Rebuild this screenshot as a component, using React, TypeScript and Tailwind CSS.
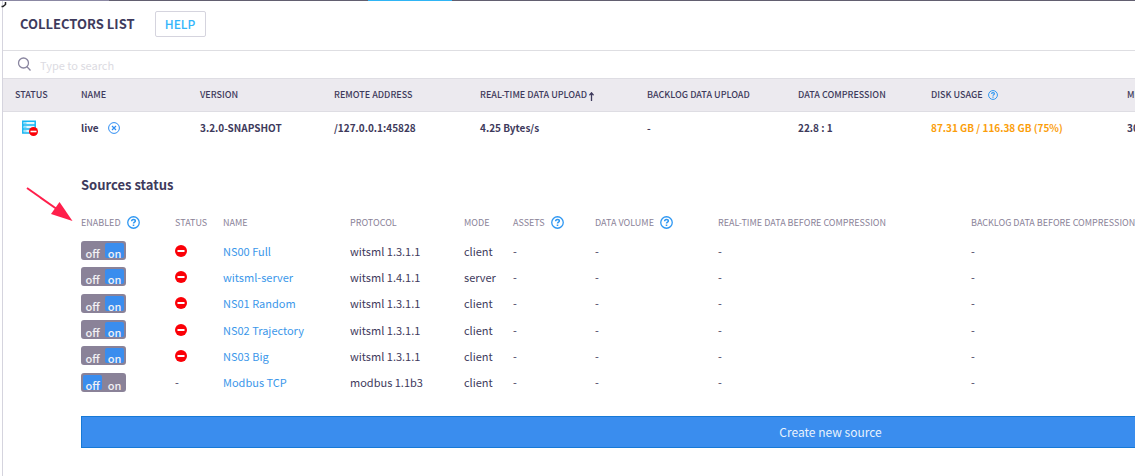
import React from "react";

const overview = [
  { label: "STATUS", width: "w-[66px]" },
  { label: "NAME", width: "w-[119px]" },
  { label: "VERSION", width: "w-[134px]" },
  { label: "REMOTE ADDRESS", width: "w-[146px]" },
  { label: "REAL-TIME DATA UPLOAD", width: "w-[167px]", sorted: true },
  { label: "BACKLOG DATA UPLOAD", width: "w-[151px]" },
  { label: "DATA COMPRESSION", width: "w-[133px]" },
  { label: "DISK USAGE", width: "w-[196px]", help: true },
  { label: "ME", width: "" },
];

const columns = [
  { label: "ENABLED", width: "w-[94px]", help: true },
  { label: "STATUS", width: "w-[48px]" },
  { label: "NAME", width: "w-[127px]" },
  { label: "PROTOCOL", width: "w-[114px]" },
  { label: "MODE", width: "w-[49px]" },
  { label: "ASSETS", width: "w-[82px]", help: true },
  { label: "DATA VOLUME", width: "w-[123px]", help: true },
  { label: "REAL-TIME DATA BEFORE COMPRESSION", width: "w-[253px]" },
  { label: "BACKLOG DATA BEFORE COMPRESSION", width: "" },
];

const sources = [
  { name: "NS00 Full", protocol: "witsml 1.3.1.1", mode: "client", on: true },
  { name: "witsml-server", protocol: "witsml 1.4.1.1", mode: "server", on: true },
  { name: "NS01 Random", protocol: "witsml 1.3.1.1", mode: "client", on: true },
  { name: "NS02 Trajectory", protocol: "witsml 1.3.1.1", mode: "client", on: true },
  { name: "NS03 Big", protocol: "witsml 1.3.1.1", mode: "client", on: true },
  { name: "Modbus TCP", protocol: "modbus 1.1b3", mode: "client", on: false },
];

function HelpIcon({ className }: { className: string }) {
  return (
    <svg className={className} viewBox="0 0 14 14" fill="none" stroke="#2e97f2" aria-hidden="true">
      <circle cx="7" cy="7" r="6.2" strokeWidth="1.4" />
      <path d="M5 5.6C5 4.4 5.8 3.7 7 3.7s2 .7 2 1.7C9 6.7 7 6.7 7 8.2" strokeWidth="1.6" />
      <path d="M7 9.2v1.6" strokeWidth="1.7" />
    </svg>
  );
}

function StoppedIcon() {
  return (
    <svg className="h-3 w-3" viewBox="0 0 12 12" role="img" aria-label="Stopped">
      <circle cx="6" cy="6" r="6" fill="#fb0007" />
      <rect x="2.5" y="5" width="7" height="2" fill="#fff" />
    </svg>
  );
}

function Toggle({ on, name }: { on: boolean; name: string }) {
  const active = "bg-[#3a8dee]";
  return (
    <button
      type="button"
      role="switch"
      aria-checked={on}
      aria-label={name}
      className="flex h-[19px] w-[45px] rounded-[3px] border-2 border-[#8a8298] bg-[#8a8298] text-[11px] leading-5 font-medium text-[#f1f0f4]"
    >
      <span className={`h-[15px] w-[19px] rounded-[2px] ${on ? "" : active}`}>off</span>
      <span className={`ml-[3px] h-[15px] w-[19px] rounded-[2px] ${on ? active : ""}`}>on</span>
    </button>
  );
}

export default function App() {
  return (
    <div className="relative min-h-screen overflow-hidden bg-white font-['Noto_Sans_CJK_SC','Noto_Sans',sans-serif] text-[#3e3a5c]">
      <div className="flex h-px bg-[#625f70]">
        <div className="w-[109px] bg-[#8b88a3]" />
        <div className="ml-[259px] w-[84px] bg-[#2fb5f5]" />
      </div>
      <svg className="absolute top-0 left-0 h-[8px] w-[8px]" viewBox="0 0 8 8" fill="none" aria-hidden="true">
        <path d="M5.5 2v2.5L3 6.500H1.500" stroke="#222" strokeWidth="1.5" />
      </svg>
      <main className="ml-[2px] min-h-[475px] min-w-[1578px] border-l border-[#d5d4de]">
        <header className="flex h-[50px] items-center gap-[20px] border-b border-[#dedee2] pb-[3px] pl-[17px]">
          <h1 className="text-[13px] leading-5 font-bold">COLLECTORS LIST</h1>
          <button type="button" className="h-[26px] w-[51px] rounded-[2px] border border-[#d5d4de] text-[12px] leading-5 font-medium text-[#33b5fb]">
            HELP
          </button>
        </header>
        <div className="flex h-[27px] items-center gap-[8px] pl-[14px]">
          <svg className="h-[15px] w-[15px]" viewBox="0 0 15 15" fill="none" stroke="#8a86a0" strokeWidth="1.3" aria-hidden="true">
            <circle cx="6.5" cy="6" r="5" />
            <path d="M10 9.800l3.500 3.700" />
          </svg>
          <input type="search" aria-label="Search collectors" placeholder="Type to search" className="w-[300px] text-[11px] leading-5 outline-none placeholder:text-[#dcdbe2]" />
        </div>
        <table className="w-full table-fixed border-collapse text-left whitespace-nowrap">
          <thead>
            <tr className="h-[33px] border-y border-[#dedde3] bg-[#eceaef] text-[9px] leading-4">
              {overview.map((c) => (
                <th key={c.label} scope="col" className={`${c.width} py-0 pl-3 font-medium`}>
                  <span className="flex items-center">
                    {c.label}
                    {c.sorted && (
                      <svg className="mt-[3px] ml-[2px] h-[9px] w-[5px]" viewBox="0 0 5 9" fill="none" stroke="#3e3a5c" aria-hidden="true">
                        <path d="M2.5 9V1M.4 3.200L2.500.8l2.100 2.400" strokeWidth="1.3" />
                      </svg>
                    )}
                    {c.help && <HelpIcon className="ml-[5px] h-[10px] w-[10px]" />}
                  </span>
                </th>
              ))}
            </tr>
          </thead>
          <tbody>
            <tr className="h-[32px] text-[10px] leading-4 font-bold">
              <td className="pl-[19px]">
                <svg className="h-4 w-4" viewBox="0 0 16 16" role="img" aria-label="Collector stopped">
                  <path d="M.8 1.200h12.400v11.800H.8z" fill="#e3f7fe" />
                  <path d="M.8 1.200h12.400v11.800H.8zM.8 5.100h12.400M.8 9h12.400" fill="none" stroke="#16b7f3" strokeWidth="1.500" />
                  <path d="M2 3.200h2.500M2 7.100h2.500M2 11h2.500" stroke="#5ccdf7" strokeWidth="1.200" />
                  <circle cx="11.5" cy="11.500" r="4.500" fill="#fb0007" />
                  <rect x="8.5" y="10.700" width="6" height="1.600" fill="#fff" />
                </svg>
              </td>
              <td className="pl-3">
                <span className="flex items-center">
                  live
                  <button type="button" aria-label="Remove live" className="ml-[9px]">
                    <svg className="h-3 w-3" viewBox="0 0 12 12" fill="none" stroke="#2e8df2" aria-hidden="true">
                      <circle cx="6" cy="6" r="5.4" />
                      <path d="M4 4l4 4M8 4l-4 4" strokeWidth="1.2" />
                    </svg>
                  </button>
                </span>
              </td>
              <td className="pl-3">3.2.0-SNAPSHOT</td>
              <td className="pl-3">/127.0.0.1:45828</td>
              <td className="pl-3">4.25 Bytes/s</td>
              <td className="pl-3">-</td>
              <td className="pl-3">22.8 : 1</td>
              <td className="pl-3 text-[#fb9e0b]">87.31 GB / 116.38 GB (75%)</td>
              <td className="pl-3">30</td>
            </tr>
          </tbody>
        </table>
        <section className="pt-[31px] pl-[78px]">
          <h2 className="text-[13px] leading-5 font-bold">Sources status</h2>
          <table className="mt-[13px] h-[188px] w-full table-fixed border-collapse text-left whitespace-nowrap">
            <thead>
              <tr className="h-[30px] text-[9px] leading-4 text-[#8a8298]">
                {columns.map((c) => (
                  <th key={c.label} scope="col" className={`${c.width} p-0 font-normal`}>
                    <span className="flex items-center">
                      {c.label}
                      {c.help && <HelpIcon className="ml-[6px] h-[13px] w-[13px]" />}
                    </span>
                  </th>
                ))}
              </tr>
            </thead>
            <tbody className="text-[11px] leading-4">
              {sources.map((s) => (
                <tr key={s.name}>
                  <td><Toggle on={s.on} name={s.name} /></td>
                  <td>{s.on ? <StoppedIcon /> : "-"}</td>
                  <td><a href="#" className="text-[#3b97ea]">{s.name}</a></td>
                  <td>{s.protocol}</td>
                  <td>{s.mode}</td>
                  <td>-</td>
                  <td>-</td>
                  <td>-</td>
                  <td>-</td>
                </tr>
              ))}
            </tbody>
          </table>
          <button type="button" className="mt-[20px] h-[32px] w-full border border-[#1779d6] bg-[#3a8dee] text-[12px] leading-5 text-[#e8f2fd]">
            Create new source
          </button>
        </section>
      </main>
      <svg className="absolute top-[185px] left-[24px] h-[40px] w-[52px]" viewBox="0 0 52 40" aria-hidden="true">
        <path d="M3 3l34 24" stroke="#ff1f4b" strokeWidth="2" />
        <path d="M48.500 36L27 29l8.500-12z" fill="#ff1f4b" />
      </svg>
    </div>
  );
}
